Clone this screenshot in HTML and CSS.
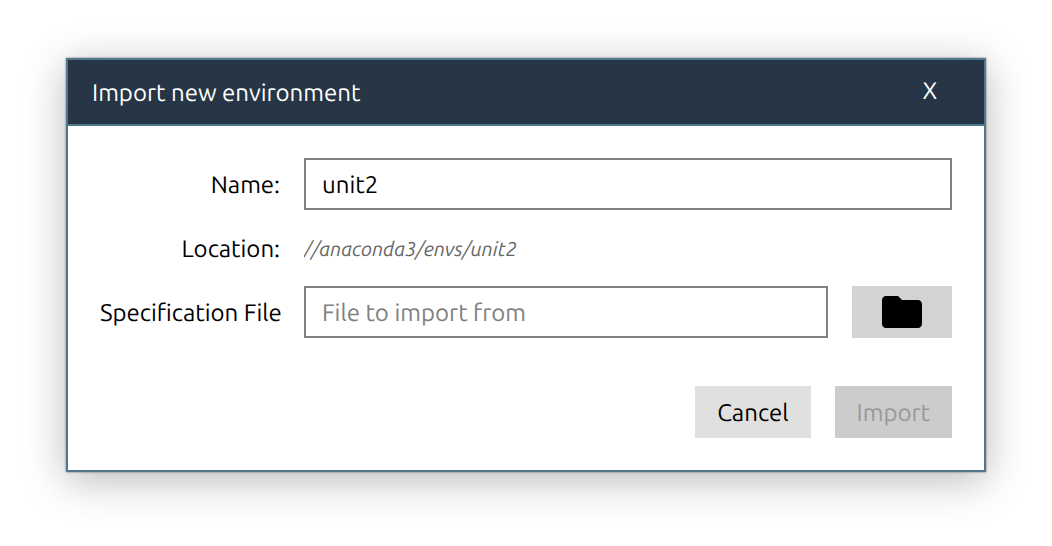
FILE: index.html
```
<!DOCTYPE html>
<html lang="en">
<head>
<meta charset="utf-8">
<meta name="viewport" content="width=device-width, initial-scale=1">
<title>Import new environment</title>
<link rel="stylesheet" href="styles.css">
</head>
<body>
<section class="dialog" role="dialog" aria-labelledby="dialog-title">
  <header class="dialog-header">
    <h1 class="dialog-title" id="dialog-title">Import new environment</h1>
    <button class="close" type="button">X</button>
  </header>
  <form class="dialog-body">
    <div class="field">
      <label class="label" for="env-name">Name:</label>
      <input class="input" id="env-name" type="text" value="unit2">
    </div>
    <div class="field">
      <span class="label">Location:</span>
      <span class="location">//anaconda3/envs/unit2</span>
    </div>
    <div class="field">
      <label class="label" for="spec-file">Specification File</label>
      <div class="file-picker">
        <input class="input" id="spec-file" type="text" placeholder="File to import from">
        <button class="browse" type="button" aria-label="Browse">
          <svg class="folder" viewBox="0 0 24 24" aria-hidden="true"><path d="M10 4H4c-1.100 0-1.990.9-1.990 2L2 18c0 1.100.9 2 2 2h16c1.100 0 2-.9 2-2V8c0-1.100-.9-2-2-2h-8l-2-2z"/></svg>
        </button>
      </div>
    </div>
    <div class="actions">
      <button class="button" type="button">Cancel</button>
      <button class="button" type="submit" disabled>Import</button>
    </div>
  </form>
</section>
</body>
</html>
```
FILE: styles.css
```
* {
  box-sizing: border-box;
}

body {
  margin: 0;
  padding: 58px 66px 74px;
  background: #fff;
  color: #000;
  font-family: Ubuntu, "Noto Sans", sans-serif;
  font-size: 24px;
  line-height: 27px;
  text-rendering: geometricPrecision;
}

button,
input {
  font: inherit;
  color: inherit;
  text-rendering: inherit;
  border-radius: 0;
}

.dialog {
  border: 2px solid #50778b;
  background: #fff;
  box-shadow: 0 0 2px rgba(0, 0, 0, 0.5), 0 8px 40px rgba(0, 0, 0, 0.28);
}

.dialog-header {
  display: flex;
  align-items: center;
  justify-content: space-between;
  min-height: 66px;
  padding: 0 32px 0 24px;
  border-bottom: 2px solid #50778b;
  background: #263646;
  color: #fff;
}

.dialog-title {
  margin: 0;
  font-size: inherit;
  font-weight: 400;
}

.close {
  width: 44px;
  padding: 0 0 4px;
  border: 0;
  background: transparent;
}

.dialog-body {
  display: flex;
  flex-direction: column;
  gap: 24px;
  padding: 32px;
}

.field {
  display: grid;
  grid-template-columns: 180px minmax(0, 1fr);
  align-items: center;
  gap: 24px;
  min-height: 28px;
}

.label {
  text-align: right;
  white-space: nowrap;
}

.input {
  width: 100%;
  min-width: 0;
  height: 52px;
  padding: 0 16px;
  border: 2px solid #808080;
  background: #fff;
}

.input::placeholder {
  color: #808080;
  opacity: 1;
}

.location {
  overflow: hidden;
  color: #666;
  font-size: 20px;
  font-style: italic;
}

.file-picker {
  display: flex;
  gap: 24px;
}

.browse {
  display: flex;
  flex: none;
  align-items: center;
  justify-content: center;
  width: 100px;
  padding: 0;
  border: 0;
  background: #d3d3d3;
}

.folder {
  width: 48px;
  height: 48px;
}

.actions {
  display: flex;
  justify-content: flex-end;
  gap: 24px;
  padding-top: 24px;
}

.button {
  height: 52px;
  padding: 0 22px;
  border: 0;
  background: #e0e0e0;
}

.button:disabled {
  background: #ccc;
  color: #999;
}
```
